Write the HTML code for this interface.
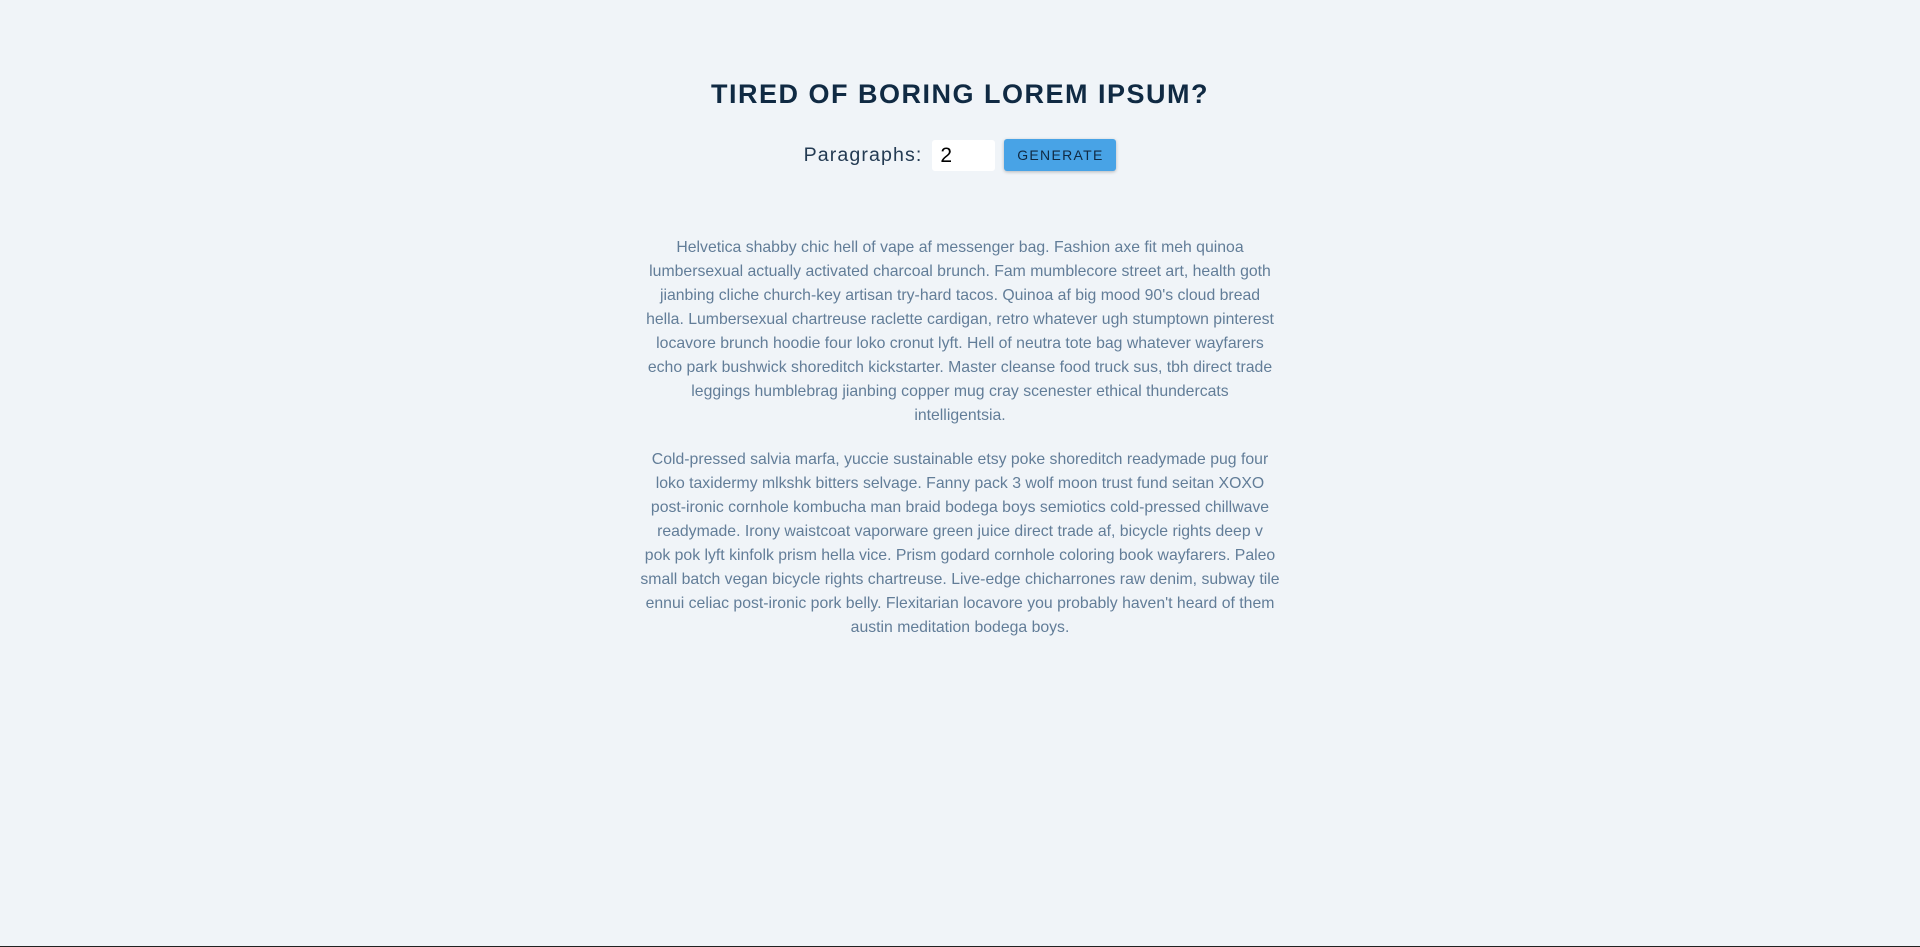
<!DOCTYPE html>
<html><head><meta charset="utf-8"><style>
html,body{margin:0;padding:0;}
body{width:1920px;height:947px;background:#f0f4f8;font-family:"Liberation Sans",sans-serif;position:relative;overflow:hidden;border-bottom:1px solid #222;box-sizing:border-box;}
h1{position:absolute;top:77px;left:0;width:1920px;text-align:center;margin:0;font-size:27px;font-weight:bold;letter-spacing:1.5px;color:#102a43;line-height:34px;}
.row{position:absolute;top:139px;left:0;width:1920px;display:flex;justify-content:center;align-items:center;}
.row label{font-size:19.6px;letter-spacing:1.1px;color:#243b53;margin-right:10px;}
.inp{width:63px;height:31px;background:#fff;border-radius:3px;box-sizing:border-box;padding-left:8px;font-size:21px;line-height:31px;color:#000;margin-right:9px;}
.btn{width:112px;height:32px;background:#48a3e6;border-radius:3px;box-shadow:0 1px 3px rgba(0,0,0,.25);color:#102a43;font-size:14px;letter-spacing:1.3px;text-align:center;line-height:32px;}
.txt{position:absolute;left:560px;width:800px;text-align:center;color:#627d98;font-size:15.8px;line-height:24px;white-space:nowrap;}
</style></head><body>
<h1>TIRED OF BORING LOREM IPSUM?</h1>
<div class="row"><label>Paragraphs:</label><div class="inp">2</div><div class="btn">GENERATE</div></div>
<div class="txt" style="top:236px">Helvetica shabby chic hell of vape af messenger bag. Fashion axe fit meh quinoa<br>lumbersexual actually activated charcoal brunch. Fam mumblecore street art, health goth<br>jianbing cliche church-key artisan try-hard tacos. Quinoa af big mood 90's cloud bread<br>hella. Lumbersexual chartreuse raclette cardigan, retro whatever ugh stumptown pinterest<br>locavore brunch hoodie four loko cronut lyft. Hell of neutra tote bag whatever wayfarers<br>echo park bushwick shoreditch kickstarter. Master cleanse food truck sus, tbh direct trade<br>leggings humblebrag jianbing copper mug cray scenester ethical thundercats<br>intelligentsia.</div>
<div class="txt" style="top:448px">Cold-pressed salvia marfa, yuccie sustainable etsy poke shoreditch readymade pug four<br>loko taxidermy mlkshk bitters selvage. Fanny pack 3 wolf moon trust fund seitan XOXO<br>post-ironic cornhole kombucha man braid bodega boys semiotics cold-pressed chillwave<br>readymade. Irony waistcoat vaporware green juice direct trade af, bicycle rights deep v<br>pok pok lyft kinfolk prism hella vice. Prism godard cornhole coloring book wayfarers. Paleo<br>small batch vegan bicycle rights chartreuse. Live-edge chicharrones raw denim, subway tile<br>ennui celiac post-ironic pork belly. Flexitarian locavore you probably haven't heard of them<br>austin meditation bodega boys.</div>
</body></html>
